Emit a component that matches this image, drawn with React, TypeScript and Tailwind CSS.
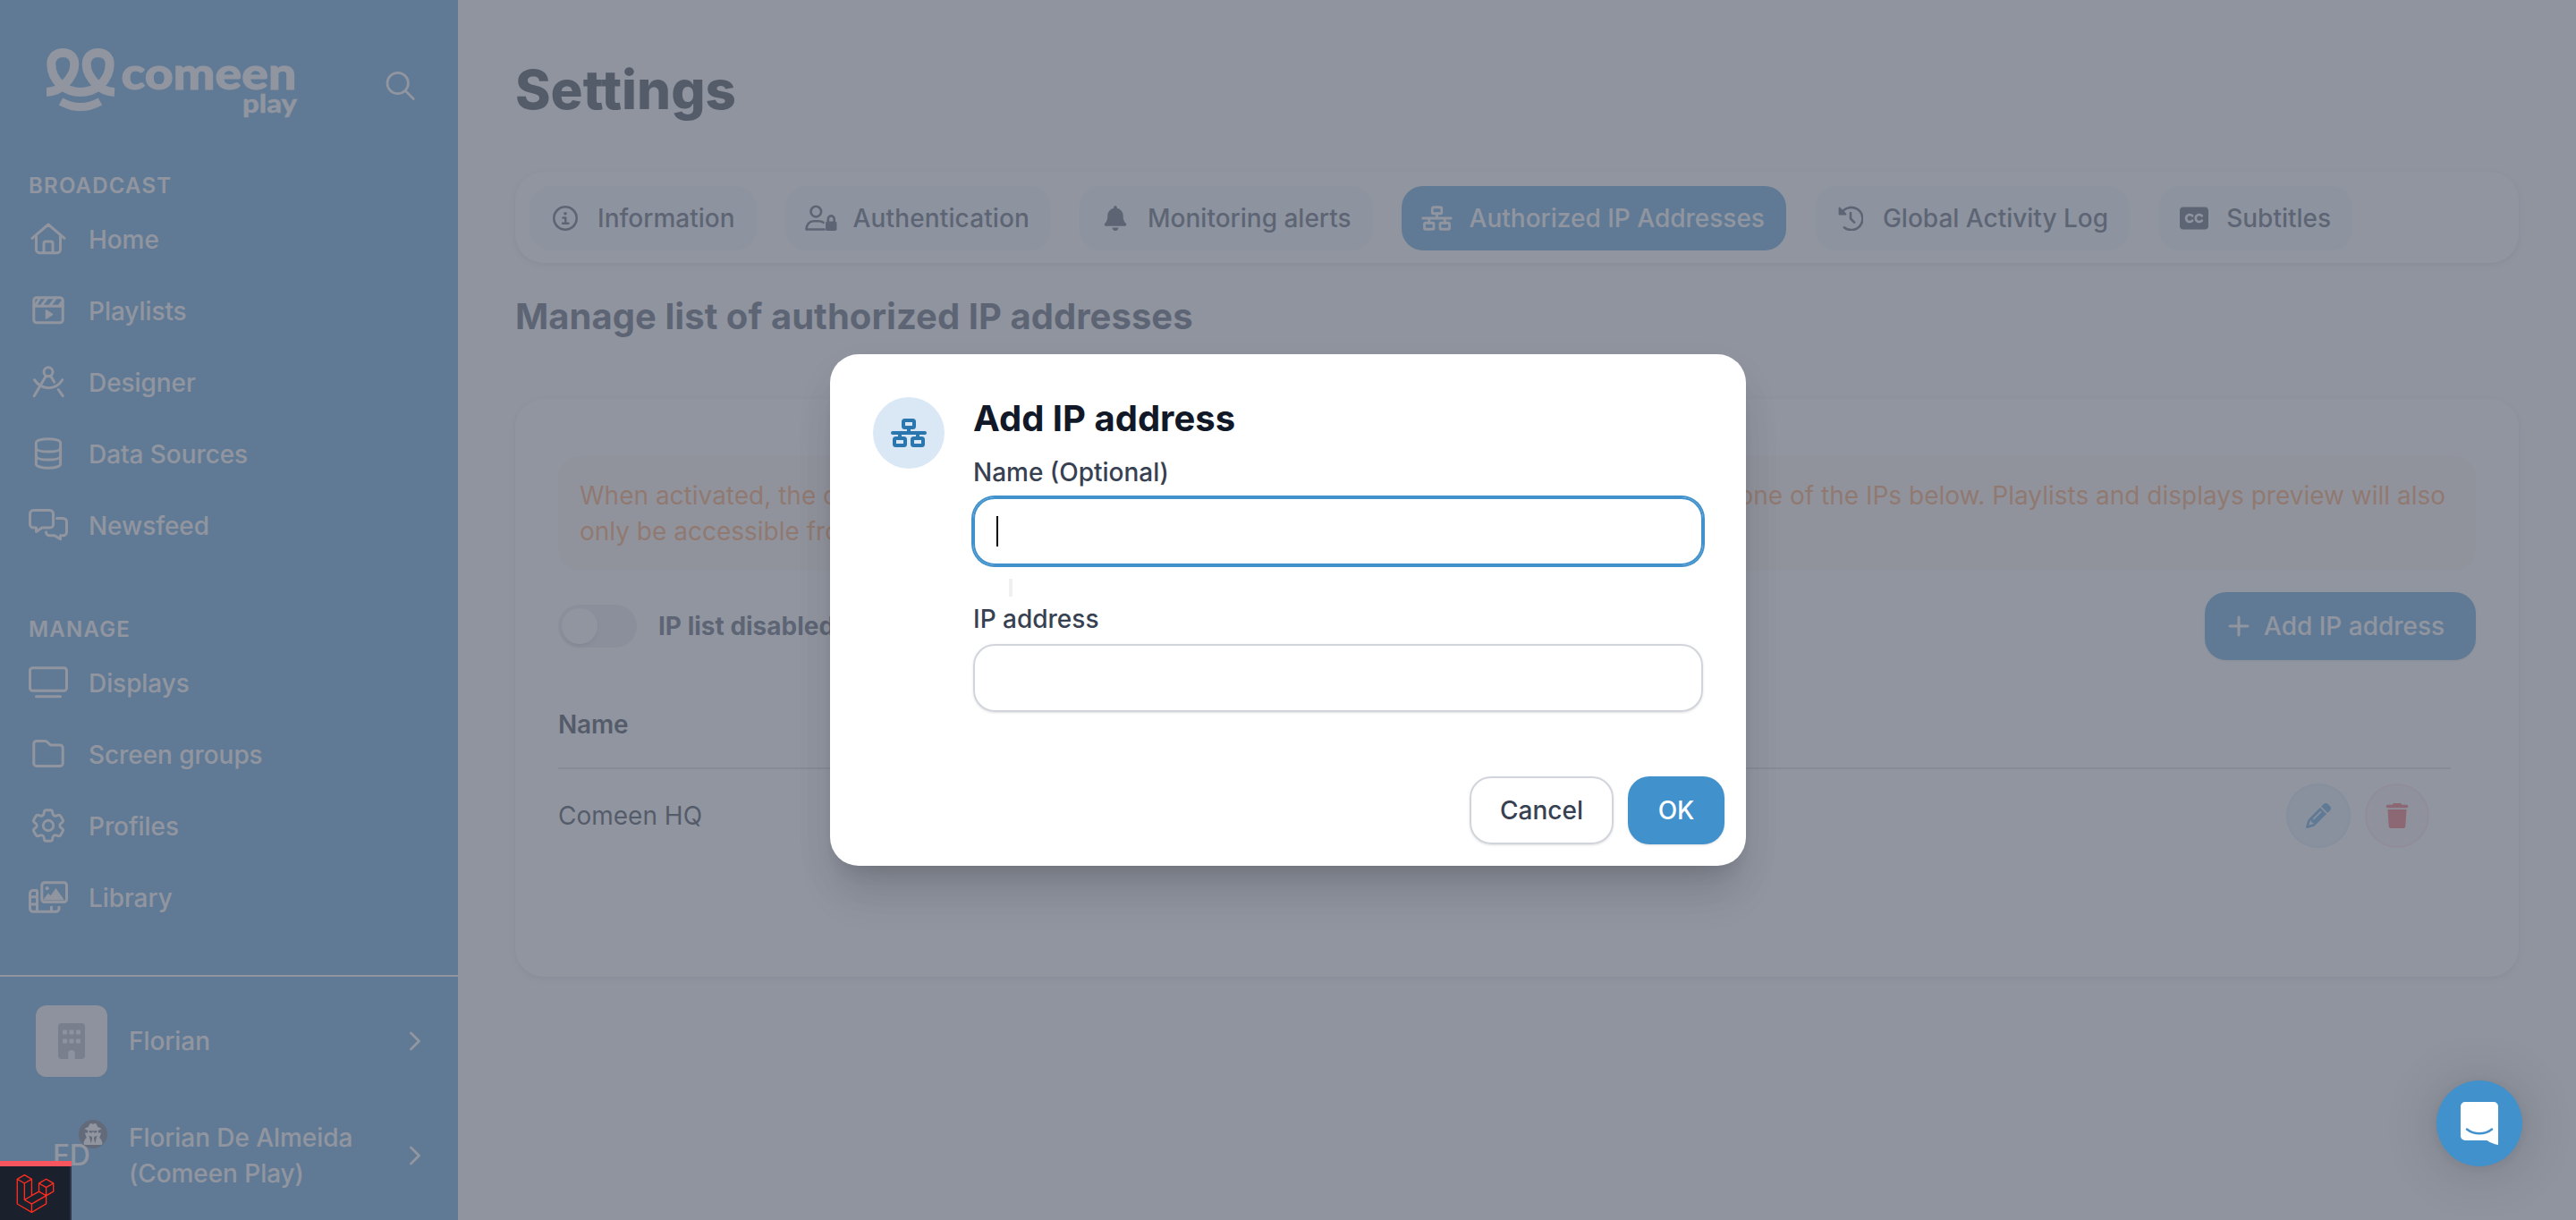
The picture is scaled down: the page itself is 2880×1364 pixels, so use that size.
import React from "react";
import { FaBell, FaBuilding, FaClosedCaptioning, FaLaravel, FaPencil, FaTrash, FaUserSecret } from "react-icons/fa6";
import { HiOutlineCog6Tooth } from "react-icons/hi2";

type IconProps = { children: React.ReactNode };

function NavGlyph({ children }: IconProps) {
  return (
    <svg viewBox="0 0 44 44" className="h-11 w-11" fill="none" stroke="currentColor" strokeWidth="3" strokeLinecap="round" strokeLinejoin="round">
      {children}
    </svg>
  );
}

const HomeIcon = () => (
  <NavGlyph>
    <path d="M4 20.3 22 5l18 15.3" />
    <path d="M8.5 17.5v15.3a4 4 0 0 0 4 4h19a4 4 0 0 0 4-4V17.5" />
    <path d="M17 36.5V26a2 2 0 0 1 2-2h6a2 2 0 0 1 2 2v10.500" />
  </NavGlyph>
);

const PlaylistsIcon = () => (
  <NavGlyph>
    <rect x="5.800" y="6.800" width="32.400" height="28" rx="3" />
    <path d="M6 16.300h32" />
    <path d="m8 15 4-7M14.500 15.500l6-8M24 15.500l6-8M34.500 15.500l3-4" />
    <path d="m19.500 21 7 4.500-7 4.500z" fill="currentColor" strokeWidth="1.500" />
  </NavGlyph>
);

const DesignerIcon = () => (
  <NavGlyph>
    <circle cx="22" cy="9.800" r="5" />
    <path d="M19.300 14.500 6.200 36.700M24.700 14.500l4 6.700M33.200 29.500l5 7.200" />
    <path d="M6.500 18.700c8 12 23.500 12 31.300 0" />
  </NavGlyph>
);

const DataIcon = () => (
  <NavGlyph>
    <path d="M8.400 9c0-2.500 6-4.300 13.600-4.300S35.600 6.500 35.600 9v24c0 2.300-6 4.200-13.600 4.200S8.400 35.300 8.400 33z" />
    <path d="M8.400 15.500c1 2.300 7 3.500 13.600 3.500s12.600-1.200 13.600-3.500M8.400 24.500c1 2.300 7 3.500 13.600 3.500s12.600-1.200 13.600-3.500" />
  </NavGlyph>
);

const NewsfeedIcon = () => (
  <NavGlyph>
    <path d="M5.500 4.500h18a4 4 0 0 1 4 4v12a3.500 3.500 0 0 1-3.500 3.500h-9l-6.500 4.500V24h-3A4 4 0 0 1 1.500 20V8.500a4 4 0 0 1 4-4z" />
    <path d="M31.500 13.500h7a4 4 0 0 1 4 4v11.300a4 4 0 0 1-4 4h-3v4l-6.500-4h-5.500a4 4 0 0 1-4-4" />
  </NavGlyph>
);

const DisplaysIcon = () => (
  <NavGlyph>
    <rect x="1.500" y="4.800" width="41" height="25.400" rx="3" />
    <path d="M8.500 36.700h27" />
  </NavGlyph>
);

const FolderIcon = () => (
  <NavGlyph>
    <path d="M5.800 9.500a3 3 0 0 1 3-3h9.500q1.500 0 2.700 1.200l3.300 3.200H35a3.200 3.200 0 0 1 3.200 3.200V31.400a3 3 0 0 1-3 3H8.800a3 3 0 0 1-3-3z" />
  </NavGlyph>
);

const LibraryIcon = () => (
  <NavGlyph>
    <rect x="14.800" y="4.800" width="27.700" height="21.700" rx="3" />
    <circle cx="20.700" cy="11.200" r="2.100" fill="currentColor" stroke="none" />
    <path d="m16 24.500 6-8 2.500 3 6-8.500 9.500 13.500z" fill="currentColor" stroke="none" />
    <path d="M10 13.500H5A3.500 3.500 0 0 0 1.500 17v16.500A3.500 3.500 0 0 0 5 37.200h25.500a3.500 3.500 0 0 0 3.500-3.700V31M9.500 13.500V37M1.500 20.800h8M1.500 29h8M25.500 31v5" strokeLinecap="butt" />
  </NavGlyph>
);

const GearIcon = () => (
  <span className="flex h-11 w-11 items-center justify-center">
    <HiOutlineCog6Tooth size={46} className="-mt-[2px] shrink-0" />
  </span>
);

function NetworkIcon({ bold, className }: { bold?: boolean; className: string }) {
  const sw = bold ? 4 : 3.2;
  return (
    <svg viewBox="0 0 40 32" className={className} fill="none" stroke="currentColor" strokeWidth={sw} strokeLinecap="round" strokeLinejoin="round">
      <rect x="14" y="2" width="12" height="8" rx="1.500" />
      <rect x="4" y="22" width="12" height="8" rx="1.500" />
      <rect x="24" y="22" width="12" height="8" rx="1.500" />
      <path d="M2 16h36M20 10v6M10 16v6M30 16v6" />
    </svg>
  );
}

const InfoIcon = () => (
  <svg viewBox="0 0 28 28" className="h-7 w-7" fill="none" stroke="currentColor" strokeWidth="2.600">
    <circle cx="14" cy="14" r="12.700" />
    <circle cx="14" cy="8.800" r="1.800" fill="currentColor" stroke="none" />
    <path d="M11.500 13.500H14.300V19.500M11 19.700h6.500" strokeWidth="2.400" strokeLinecap="round" strokeLinejoin="round" />
  </svg>
);

const UserLockIcon = () => (
  <svg viewBox="0 0 36 30" className="h-[30px] w-9 shrink-0" fill="none" stroke="currentColor" strokeWidth="2.600">
    <circle cx="12.300" cy="7.600" r="5.800" />
    <path d="M20.500 19.800c-1.500-1.300-3.500-1.600-5.500-1.600h-5.500c-4.500 0-8 3.800-8 9.300h20" strokeLinecap="round" strokeLinejoin="round" />
    <rect x="23" y="18.500" width="12.500" height="10.500" rx="1.800" fill="currentColor" stroke="none" />
    <path d="M25.800 19v-3.200a3.450 3.450 0 0 1 6.900 0V19" />
  </svg>
);

const HistoryIcon = () => (
  <svg viewBox="0 0 28 28" className="h-7 w-7" fill="none" stroke="currentColor" strokeWidth="2.600" strokeLinecap="round" strokeLinejoin="round">
    <path d="M3.500 8.800A12.600 12.600 0 1 1 6.800 24.300" />
    <path d="M1.500 2.500v7h7z" fill="currentColor" strokeWidth="1.800" />
    <path d="M14 8v6.500l4.200 4.200" />
  </svg>
);

function Logo() {
  return (
    <svg viewBox="52 50 284 86" className="h-[86px] w-[284px]">
      <g fill="none" stroke="currentColor" strokeWidth="10">
        <path d="M52 103C61 102.500 67 99.500 72 94.500C80 86.500 83.300 79 83.300 72C83.300 63.500 78 59 70.300 59C62.500 59 57.300 63.800 57.300 72C57.300 81 61.500 89 68 95C75 101 83 103 90 103C97 103 105 101 112 95C118.500 89 122.700 81 122.700 72C122.700 63.800 117.500 59 109.700 59C102 59 96.700 63.500 96.700 72C96.700 79 100 86.500 108 94.500C113 99.500 119 102.500 128 103" />
        <path d="M68 113.500Q90 125.800 112 113.500" strokeWidth="9" />
      </g>
      <g fill="currentColor" fontFamily="Lato" fontWeight="900" stroke="currentColor">
        <text x="135.500" y="99.500" fontSize="50" textLength="196" lengthAdjust="spacingAndGlyphs" strokeWidth="1">comeen</text>
        <text x="271" y="126" fontSize="28.500" textLength="61" lengthAdjust="spacingAndGlyphs" strokeWidth="0.300">play</text>
      </g>
    </svg>
  );
}

const broadcast = [
  { label: "Home", Icon: HomeIcon },
  { label: "Playlists", Icon: PlaylistsIcon },
  { label: "Designer", Icon: DesignerIcon },
  { label: "Data Sources", Icon: DataIcon },
  { label: "Newsfeed", Icon: NewsfeedIcon },
];

const manage = [
  { label: "Displays", Icon: DisplaysIcon },
  { label: "Screen groups", Icon: FolderIcon },
  { label: "Profiles", Icon: GearIcon },
  { label: "Library", Icon: LibraryIcon },
];

function NavSection({ title, items }: { title: string; items: typeof broadcast }) {
  return (
    <div>
      <h3 className="mb-1 pl-8 text-[24px] leading-8 font-semibold tracking-[0.05em] uppercase">{title}</h3>
      {items.map(({ label, Icon }) => (
        <a key={label} className="flex h-20 items-center gap-[23px] pl-8 tracking-[-0.07px]">
          <Icon />
          <span>{label}</span>
        </a>
      ))}
    </div>
  );
}

const Chevron = () => (
  <svg viewBox="0 0 14 24" className="h-6 w-[14px]" fill="none" stroke="currentColor" strokeWidth="3" strokeLinecap="round" strokeLinejoin="round">
    <path d="m2.500 3 9 9-9 9" />
  </svg>
);

function Sidebar() {
  return (
    <aside className="flex h-full w-[512px] shrink-0 flex-col bg-[#4191cd] font-medium text-white">
      <div className="flex h-[192px] items-start justify-between pt-[50px] pr-12 pl-[52px]">
        <Logo />
        <svg viewBox="0 0 34 34" className="mt-[29px] h-[34px] w-[34px]" fill="none" stroke="currentColor" strokeWidth="2.700" strokeLinecap="round">
          <circle cx="14.700" cy="14" r="11.700" />
          <path d="m23.300 22.500 9 9" />
        </svg>
      </div>
      <nav className="flex flex-1 flex-col gap-[60px]">
        <NavSection title="Broadcast" items={broadcast} />
        <NavSection title="Manage" items={manage} />
      </nav>
      <div className="flex h-[274px] flex-col gap-12 border-t-2 border-white pt-8 pr-[41px] pl-10 tracking-[-0.07px]">
        <div className="flex h-20 items-center">
          <div className="flex h-20 w-20 items-center justify-center rounded-xl bg-[#f3f4f6]">
            <FaBuilding size={40} className="text-[#a3a7b0]" />
          </div>
          <span className="ml-6 flex-1">Florian</span>
          <Chevron />
        </div>
        <div className="flex h-20 items-center">
          <div className="relative flex h-20 w-20 items-center justify-center text-[32px]">
            FD
            <span className="absolute top-0 right-0 flex h-8 w-8 items-center justify-center rounded-full bg-[#4b5563]">
              <FaUserSecret size={24} />
            </span>
          </div>
          <span className="ml-6 flex-1">
            Florian De Almeida
            <br />
            (Comeen Play)
          </span>
          <Chevron />
        </div>
      </div>
    </aside>
  );
}

const tabs = [
  { label: "Information", icon: <InfoIcon /> },
  { label: "Authentication", icon: <UserLockIcon />, wide: true },
  { label: "Monitoring alerts", icon: <FaBell size={28} /> },
  { label: "Authorized IP Addresses", icon: <NetworkIcon className="h-7 w-[35px] shrink-0" />, active: true },
  { label: "Global Activity Log", icon: <HistoryIcon /> },
  { label: "Subtitles", icon: <FaClosedCaptioning size={32} /> },
];

function Main() {
  return (
    <main className="flex flex-1 flex-col bg-[#f9fafb] px-16 pt-16 text-[#374151]">
      <h1 className="text-[60px] leading-[72px] font-extrabold text-[#111827]">Settings</h1>
      <div className="mt-14 flex h-[102px] items-start gap-8 rounded-[32px] bg-white p-4 font-medium shadow-[0_2px_6px_rgba(0,0,0,0.12)]">
        {tabs.map((t) => (
          <div key={t.label} className={t.active ? "flex h-[72px] items-center gap-5 rounded-3xl bg-[#4191cd] px-6 text-white" : "flex h-[72px] items-center gap-5 rounded-3xl bg-[#f1f7fc] px-6"}>
            <span className="flex w-8 items-center justify-center">{t.icon}</span>
            <span className={t.wide ? "tracking-[0.13px]" : ""}>{t.label}</span>
          </div>
        ))}
      </div>
      <h2 className="mt-8 text-[40px] leading-[56px] font-bold tracking-[0.04px]">Manage list of authorized IP addresses</h2>
      <section className="mt-16 h-[646px] rounded-[32px] bg-white px-12 pt-16 shadow-[0_2px_6px_rgba(0,0,0,0.12)]">
        <div className="h-32 rounded-3xl bg-[#fff7ed] p-6 text-[#fd8f45]">
          <div className="flex w-[2086px] justify-between whitespace-nowrap">
            <span>When activated, the dashboard will only be accessible to users from</span>
            <span>one of the IPs below. Playlists and displays preview will also</span>
          </div>
          <div>only be accessible from these IPs.</div>
        </div>
        <div className="mt-6 flex h-[76px] items-center">
          <div className="flex h-12 w-[88px] items-center rounded-full bg-[#e5e7eb] px-1">
            <div className="h-10 w-10 rounded-full bg-white shadow-md" />
          </div>
          <span className="ml-6 font-bold">IP list disabled</span>
          <button className="ml-auto flex h-[76px] w-[303px] items-center gap-4 rounded-3xl bg-[#4191cd] pl-[26px] font-medium whitespace-nowrap text-white shadow-sm">
            <svg viewBox="0 0 24 24" className="h-6 w-6" stroke="currentColor" strokeWidth="3" strokeLinecap="round">
              <path d="M12 2v20M2 12h20" />
            </svg>
            Add IP address
          </button>
        </div>
        <div className="mr-7 flex h-[122px] items-end border-b-2 border-[#d1d5db] pb-[28px] font-semibold tracking-[-0.2px] text-[#111827]">Name</div>
        <div className="mr-7 flex h-[104px] items-center gap-4 pr-6 text-[#111827]">
          <span className="flex-1">Comeen HQ</span>
          <span className="flex h-[72px] w-[72px] items-center justify-center rounded-full border-2 border-[#d3e5f4] bg-[#e2eef8] text-[#4191cd]">
            <FaPencil size={28} />
          </span>
          <span className="flex h-[72px] w-[72px] items-center justify-center rounded-full border-2 border-[#fde0e2] bg-[#fbeef0] text-[#f04a50]">
            <FaTrash size={28} />
          </span>
        </div>
      </section>
    </main>
  );
}

function Modal() {
  return (
    <div className="absolute inset-0 flex items-center justify-center bg-[#6b7280bf]">
      <div className="flex h-[572px] w-[1024px] flex-col justify-between rounded-[32px] bg-white shadow-[0_40px_50px_-10px_rgba(0,0,0,0.1),0_16px_20px_-12px_rgba(0,0,0,0.1),0_20px_50px_-6px_rgba(0,0,0,0.08)]">
        <div className="flex gap-8 px-12 pt-12">
          <div className="flex h-20 w-20 items-center justify-center rounded-full bg-[#dae8f6] text-[#2a76af]">
            <NetworkIcon bold className="h-8 w-10" />
          </div>
          <div className="flex-1 font-medium text-[#374151]">
            <h3 className="mb-4 text-[40px] leading-[48px] font-bold text-[#111827]">Add IP address</h3>
            <div>Name (Optional)</div>
            <div className="mt-2 flex h-[76px] items-center rounded-3xl border-2 border-[#4191cd] pl-6 shadow-sm ring-2 ring-[#4191cd]">
              <span className="h-[34px] w-[2px] bg-black" />
            </div>
            <div className="mt-[15px] mb-[5px] ml-10 h-5 w-1 bg-[#f0f0f1]" />
            <div>IP address</div>
            <div className="mt-2 h-[76px] rounded-3xl border-2 border-[#d1d5db] shadow-sm" />
          </div>
        </div>
        <div className="flex justify-end gap-4 p-6 font-medium">
          <button className="h-[76px] w-[161px] rounded-3xl border-2 border-[#d1d5db] text-[#374151] shadow-sm">Cancel</button>
          <button className="h-[76px] w-[108px] rounded-3xl bg-[#4191cd] text-white shadow-sm">OK</button>
        </div>
      </div>
    </div>
  );
}

export default function App() {
  return (
    <div className="relative flex h-[1364px] w-[2880px] overflow-hidden font-['Inter',sans-serif] text-[28px] leading-10">
      <Sidebar />
      <Main />
      <Modal />
      <div className="absolute right-[60px] bottom-[60px] flex h-24 w-24 items-center justify-center rounded-full bg-[#4191cd] shadow-[0_2px_12px_rgba(0,0,0,0.06),0_4px_64px_rgba(0,0,0,0.16)]">
        <svg viewBox="0 0 42 48" className="h-12 w-[42px]">
          <path d="M5 0h32a5 5 0 0 1 5 5v43c-5-1-9-2.500-12.500-5H5a5 5 0 0 1-5-5V5a5 5 0 0 1 5-5z" fill="#fff" />
          <path d="M7 30.500c8 6.400 20 6.400 28 0" fill="none" stroke="#4191cd" strokeWidth="2.500" strokeLinecap="round" />
        </svg>
      </div>
      <div className="absolute bottom-0 left-0 flex h-[66px] w-20 flex-col bg-[#1a202c]">
        <div className="h-[6px] bg-[#f9555f]" />
        <div className="flex flex-1 items-center justify-center border-r-2 border-[#2d3748]">
          <FaLaravel size={43} className="text-[#ff2d20]" />
        </div>
      </div>
    </div>
  );
}
